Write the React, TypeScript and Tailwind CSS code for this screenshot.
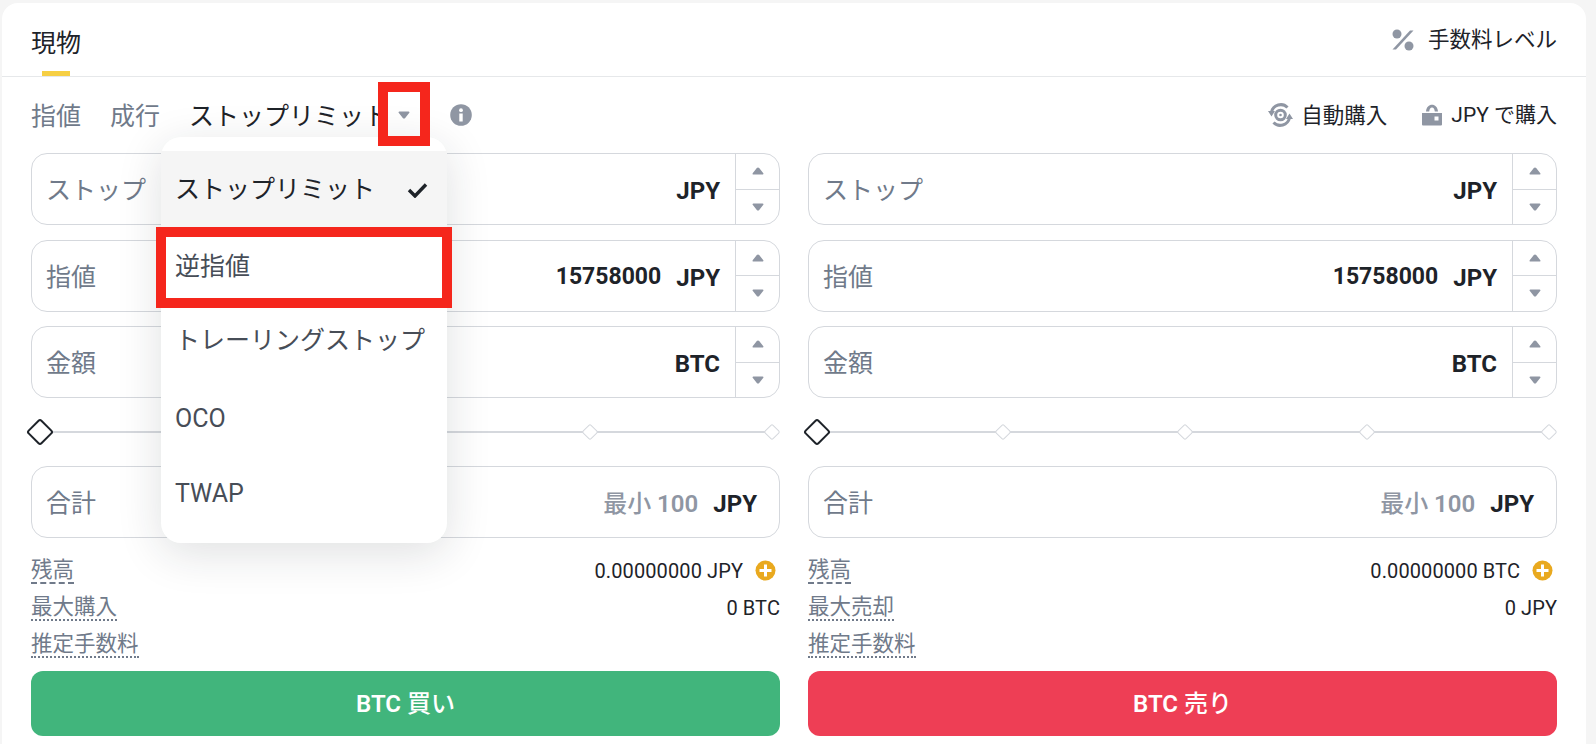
import React from "react";

const FONT = "font-['Roboto','Noto_Sans_CJK_JP',sans-serif]";

const UpArrow = () => (
    <svg width="12" height="8" viewBox="0 0 14 9" fill="#8f96a3">
        <path d="M5.6 1 .8 7c-.5.7 0 1.6.8 1.6h10.8c.8 0 1.300-.9.8-1.600L8.400 1C7.700.1 6.300.1 5.600 1z" />
    </svg>
);

const DownArrow = () => (
    <svg width="12" height="8" viewBox="0 0 14 9" fill="#8f96a3">
        <path d="M5.600 8 .8 2C.3 1.300.8.400 1.600.400h10.800c.8 0 1.300.9.8 1.600L8.400 8c-.7.9-2.100.9-2.800 0z" />
    </svg>
);

const PercentIcon = () => (
    <svg width="22" height="22" viewBox="0 0 22 22" fill="#8f96a3">
        <circle cx="5" cy="5" r="4.500" />
        <circle cx="17" cy="17" r="4.500" />
        <path d="M18 1.500h3.500L4 20.500H.5z" />
    </svg>
);

const AutoIcon = () => (
    <svg width="25" height="24" viewBox="0 0 25 24" fill="none" stroke="#8f96a3">
        <path d="M3.500 9A9.500 9.500 0 0 1 19.500 4.500" strokeWidth="3" />
        <path d="M21.500 15A9.500 9.500 0 0 1 5.500 19.500" strokeWidth="3" />
        <path d="M0 8h7L3.500 13.500zM25 16h-7l3.500-5.500z" fill="#8f96a3" stroke="none" />
        <circle cx="12.500" cy="12" r="4.800" strokeWidth="3" />
        <circle cx="12.500" cy="12" r="1.300" fill="#8f96a3" stroke="none" />
    </svg>
);

const LockIcon = () => (
    <svg width="22" height="22" viewBox="0 0 22 22" fill="#8f96a3">
        <path d="M5 7.500C5.500 3 8 .8 11 .8s5.500 2.200 6 6.700h-3.200C13.500 5 12.500 3.600 11 3.600S8.500 5 8.200 7.500z" />
        <path fillRule="evenodd" d="M1 9h20v11.500a1 1 0 0 1-1 1H2a1 1 0 0 1-1-1zm12.500 3.500v4h4v-4z" />
    </svg>
);

const InfoIcon = () => (
    <svg width="22" height="22" viewBox="0 0 22 22">
        <circle cx="11" cy="11" r="10.800" fill="#8f96a3" />
        <circle cx="11" cy="6.200" r="1.900" fill="#fff" />
        <rect x="9.300" y="9.500" width="3.400" height="8" fill="#fff" />
    </svg>
);

const CheckIcon = () => (
    <svg width="21" height="16" viewBox="0 0 21 16" fill="none">
        <path d="M2 8l6 6L19 2.500" stroke="#1e2329" strokeWidth="3.400" />
    </svg>
);

const PlusIcon = () => (
    <svg width="21" height="21" viewBox="0 0 21 21">
        <circle cx="10.500" cy="10.500" r="10" fill="#e9a91f" />
        <path d="M10.500 4.500v12M4.500 10.500h12" stroke="#fff" strokeWidth="3" />
    </svg>
);

const Stepper = () => (
    <div className="flex h-full w-[44px] flex-col border-l border-[#d5d8dd]">
        <div className="flex flex-1 items-center justify-center border-b border-[#d5d8dd]">
            <UpArrow />
        </div>
        <div className="flex flex-1 items-center justify-center">
            <DownArrow />
        </div>
    </div>
);

function OrderInput({ label, value, unit }: { label: string; value?: string; unit: string }) {
    return (
        <div className="flex h-[72px] items-center rounded-[16px] border border-[#d5d8dd] pl-[14px]">
            <span className="flex-1 pt-[4px] text-[25px] text-[#707a8a]">{label}</span>
            {value && <span className="mr-[15px] pt-[4px] text-[23px] font-bold text-[#1e2329]">{value}</span>}
            <span className="mr-[15px] pt-[4px] text-[24px] font-bold text-[#1e2329]">{unit}</span>
            <Stepper />
        </div>
    );
}

function TotalInput({ unit }: { unit: string }) {
    return (
        <div className="flex h-[72px] items-center rounded-[16px] border border-[#d5d8dd] pl-[14px] pr-[22px]">
            <span className="flex-1 pt-[4px] text-[25px] text-[#707a8a]">合計</span>
            <span className="mr-[15px] pt-[4px] text-[24px] font-semibold text-[#8f96a3]">
                <span className="font-medium">最小</span> 100
            </span>
            <span className="pt-[4px] text-[24px] font-bold text-[#1e2329]">{unit}</span>
        </div>
    );
}

const Diamond = () => <div className="h-[12px] w-[12px] rotate-45 rounded-[2px] border border-[#d5d8dd] bg-white" />;

function Slider() {
    return (
        <div className="relative flex h-[28px] items-center justify-between pr-[2px]">
            <div className="absolute left-[10px] right-[4px] top-[13px] h-[2px] bg-[#d5d8dd]" />
            <div className="relative -ml-[1px] h-[20px] w-[20px] rotate-45 rounded-[3px] border-2 border-[#1e2329] bg-white" />
            <div className="relative"><Diamond /></div>
            <div className="relative"><Diamond /></div>
            <div className="relative"><Diamond /></div>
            <div className="relative"><Diamond /></div>
        </div>
    );
}

function InfoRow({ label, value, plus, dashed }: { label: string; value?: string; plus?: boolean; dashed?: boolean }) {
    return (
        <div className="flex h-[37px] items-center justify-between">
            <span className={`text-[21.5px] leading-[25px] text-[#707a8a] border-b-2 border-[#707a8a] ${dashed ? "border-dashed" : "border-dotted"}`}>
                {label}
            </span>
            {value && (
                <span className="flex items-center text-[20px] tracking-[0.1px] text-[#1e2329]">
                    {value}
                    {plus && <span className="ml-[12px] mr-[4px] flex"><PlusIcon /></span>}
                </span>
            )}
        </div>
    );
}

function OrderColumn({ side }: { side: "buy" | "sell" }) {
    const isBuy = side === "buy";
    return (
        <div>
            <div className="flex flex-col gap-[14.5px]">
                <OrderInput label="ストップ" unit="JPY" />
                <OrderInput label="指値" value="15758000" unit="JPY" />
                <OrderInput label="金額" unit="BTC" />
            </div>
            <div className="mt-[20px]">
                <Slider />
            </div>
            <div className="mt-[20px]">
                <TotalInput unit="JPY" />
            </div>
            <div className="mt-[14px]">
                <InfoRow label="残高" value={isBuy ? "0.00000000 JPY" : "0.00000000 BTC"} plus dashed />
                <InfoRow label={isBuy ? "最大購入" : "最大売却"} value={isBuy ? "0 BTC" : "0 JPY"} />
                <InfoRow label="推定手数料" />
            </div>
            <button className={`mt-[8px] flex h-[65px] w-full items-center justify-center rounded-[12px] text-[24px] font-semibold text-white ${isBuy ? "bg-[#41b57c]" : "bg-[#ee3e55]"}`}>
                BTC
                <span className="ml-[6px] font-medium">{isBuy ? "買い" : "売り"}</span>
            </button>
        </div>
    );
}

export default function App() {
    return (
        <div className={`h-[744px] overflow-hidden bg-[#f5f5f5] pl-[2px] pr-[10px] pt-[3px] ${FONT}`}>
            <div className="relative h-[741px] rounded-t-[16px] bg-white">
                <div className="flex h-[74px] items-start justify-between border-b border-[#e6e8ea] px-[29px]">
                    <div className="relative h-[73px] pt-[23px]">
                        <span className="text-[25px] leading-[36px] text-[#1e2329]">現物</span>
                        <div className="absolute bottom-0 left-[11px] h-[5px] w-[28px] bg-[#f6cf44]" />
                    </div>
                    <div className="flex items-center pt-[22px] text-[21.5px] leading-[30px] text-[#1e2329]">
                        <PercentIcon />
                        <span className="ml-[14px]">手数料レベル</span>
                    </div>
                </div>

                <div className="flex h-[76px] items-center justify-between px-[29px]">
                    <div className="flex items-center text-[25px]">
                        <span className="pt-[4px] text-[#707a8a]">指値</span>
                        <span className="ml-[29px] pt-[4px] text-[#707a8a]">成行</span>
                        <span className="ml-[29px] pt-[4px] text-[#1e2329]">ストップリミット</span>
                        <span className="ml-[9px] flex"><DownArrow /></span>
                        <span className="ml-[40px] flex"><InfoIcon /></span>
                    </div>
                    <div className="flex items-center text-[21.5px] text-[#1e2329]">
                        <AutoIcon />
                        <span className="ml-[8px] pt-[2px]">自動購入</span>
                        <span className="ml-[34px] flex"><LockIcon /></span>
                        <span className="ml-[8px] pt-[2px] text-[21px]">JPY で購入</span>
                    </div>
                </div>

                <div className="grid grid-cols-2 gap-[28px] px-[29px]">
                    <OrderColumn side="buy" />
                    <OrderColumn side="sell" />
                </div>

                {/* dropdown */}
                <div className="absolute left-[159px] top-[134px] h-[406px] w-[286px] rounded-[20px] bg-white py-[14px] shadow-[0_10px_45px_rgba(30,35,41,0.14)]">
                    <div className="flex h-[76px] items-center justify-between bg-[#f5f5f5] pl-[14px] pr-[19px] pt-[2px] text-[25px] text-[#1e2329]">
                        ストップリミット
                        <CheckIcon />
                    </div>
                    <div className="flex h-[75px] items-center pl-[14px] pt-[4px] text-[25px] text-[#474d57]">逆指値</div>
                    <div className="flex h-[75px] items-center pl-[14px] pt-[2px] text-[25px] text-[#474d57]">トレーリングストップ</div>
                    <div className="flex h-[75px] items-center pl-[14px] pt-[8px] text-[25px] text-[#474d57]">OCO</div>
                    <div className="flex h-[75px] items-center pl-[14px] pt-[8px] text-[25px] text-[#474d57]">TWAP</div>
                </div>

                {/* red marks */}
                <div className="absolute left-[376px] top-[79px] h-[64px] w-[52px] border-[10px] border-[#f5261c]" />
                <div className="absolute left-[154px] top-[224px] h-[81px] w-[296px] border-[10px] border-[#f5261c]" />
            </div>
        </div>
    );
}
